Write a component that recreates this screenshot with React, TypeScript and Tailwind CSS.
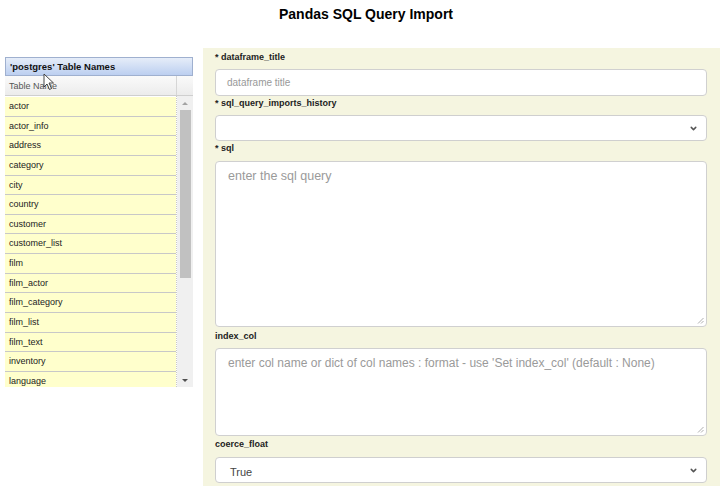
import { ChevronDown } from "lucide-react";

const tables = [
  "actor",
  "actor_info",
  "address",
  "category",
  "city",
  "country",
  "customer",
  "customer_list",
  "film",
  "film_actor",
  "film_category",
  "film_list",
  "film_text",
  "inventory",
  "language",
];

function Label({ text, required }: { text: string; required?: boolean }) {
  return (
    <div className="h-[12px] text-[9px] leading-[12px] font-bold text-[#222]">
      {required ? "* " : ""}
      {text}
    </div>
  );
}

function SelectBox({ value }: { value: string }) {
  return (
    <div className="relative h-[26px] w-full rounded-[4px] border border-[#cfcfcf] bg-white">
      <span className="absolute left-[14px] top-[6px] text-[11px] text-[#444]">
        {value}
      </span>
      <ChevronDown
        className="absolute right-[8px] top-[8px] h-[9px] w-[9px] text-[#555]"
        strokeWidth={4}
      />
    </div>
  );
}

function Grip() {
  return (
    <svg
      className="absolute bottom-[2px] right-[2px]"
      width="7"
      height="7"
      viewBox="0 0 7 7"
    >
      <path d="M6.5 1 L1 6.5 M6.5 4 L4 6.5" stroke="#999" strokeWidth="0.8" />
    </svg>
  );
}

export default function App() {
  return (
    <div
      className="relative h-[486px] w-[720px] overflow-hidden bg-white"
      style={{ fontFamily: '"Liberation Sans", Arial, sans-serif' }}
    >
      {/* Title */}
      <div className="h-[30px] pt-[5px] pl-[12px] text-center text-[14px] leading-[18px] font-bold text-black">
        Pandas SQL Query Import
      </div>

      <div className="mt-[18px] flex">
        {/* Table list */}
        <div className="w-[203px] pl-[5px] pt-[9px]">
          <div className="w-[188px]">
            <div className="h-[19px] border border-[#9fb0cf] bg-gradient-to-b from-[#e6edf9] to-[#bccff0] pl-[4px] text-[9.5px] leading-[17px] font-bold text-[#111]">
              'postgres' Table Names
            </div>
            <div className="flex h-[20px] border-b border-[#cfcfcf] bg-gradient-to-b from-[#fafafa] to-[#ececec]">
              <div className="w-[172px] border-r border-[#d6d6d6] pl-[4px] text-[9px] leading-[20px] text-[#555]">
                Table Name
              </div>
              <div className="flex-1" />
            </div>
            <div className="flex h-[291px]">
              <div className="w-[172px] overflow-hidden border-r border-dotted border-[#c8c8c8] pt-[1px]">
                {tables.map((t) => (
                  <div
                    key={t}
                    className="h-[19.65px] border-b border-[#c8c8c8] bg-[#ffffcc] pl-[4px] text-[9px] leading-[18.65px] text-[#222]"
                  >
                    {t}
                  </div>
                ))}
              </div>
              <div className="flex w-[16px] flex-col items-center bg-[#f0f0f0]">
                <div className="flex h-[14px] items-center justify-center">
                  <div className="h-0 w-0 border-x-[3px] border-b-[3px] border-x-transparent border-b-[#a3a3a3]" />
                </div>
                <div className="h-[168px] w-[11px] bg-[#c1c1c1]" />
                <div className="flex-1" />
                <div className="flex h-[14px] items-center justify-center">
                  <div className="h-0 w-0 border-x-[3px] border-t-[3px] border-x-transparent border-t-[#505050]" />
                </div>
              </div>
            </div>
          </div>
        </div>

        {/* Form */}
        <div className="h-[438px] flex-1 bg-[#f5f5e0] pl-[12px] pr-[13px] pt-[3px]">
          <Label text="dataframe_title" required />
          <div className="mt-[6px] flex h-[27px] items-center rounded-[4px] border border-[#d0d0d0] bg-white pl-[11px] text-[10px] text-[#999]">
            dataframe title
          </div>

          <div className="mt-[1px]">
            <Label text="sql_query_imports_history" required />
          </div>
          <div className="mt-[6px]">
            <SelectBox value="" />
          </div>

          <div className="mt-[1px]">
            <Label text="sql" required />
          </div>
          <div className="relative mt-[7px] h-[166px] rounded-[4px] border border-[#d0d0d0] bg-white pl-[12px] pt-[5px] text-[12.5px] text-[#9a9a9a]">
            enter the sql query
            <Grip />
          </div>

          <div className="mt-[3px]">
            <Label text="index_col" />
          </div>
          <div className="relative mt-[6px] h-[88px] rounded-[4px] border border-[#d0d0d0] bg-white pl-[12px] pt-[5px] text-[12px] text-[#9a9a9a]">
            enter col name or dict of col names : format - use 'Set index_col' (default : None)
            <Grip />
          </div>

          <div className="mt-[2px]">
            <Label text="coerce_float" />
          </div>
          <div className="mt-[7px]">
            <SelectBox value="True" />
          </div>
        </div>
      </div>

      {/* Mouse pointer */}
      <svg
        className="absolute left-[43px] top-[73px]"
        width="12"
        height="18"
        viewBox="0 0 12 18"
      >
        <path
          d="M1 1 L1 14 L4 11 L6.5 16.5 L8.5 15.5 L6 10 L10.5 10 Z"
          fill="white"
          stroke="#333"
          strokeWidth="0.9"
          strokeLinejoin="round"
        />
      </svg>
    </div>
  );
}
